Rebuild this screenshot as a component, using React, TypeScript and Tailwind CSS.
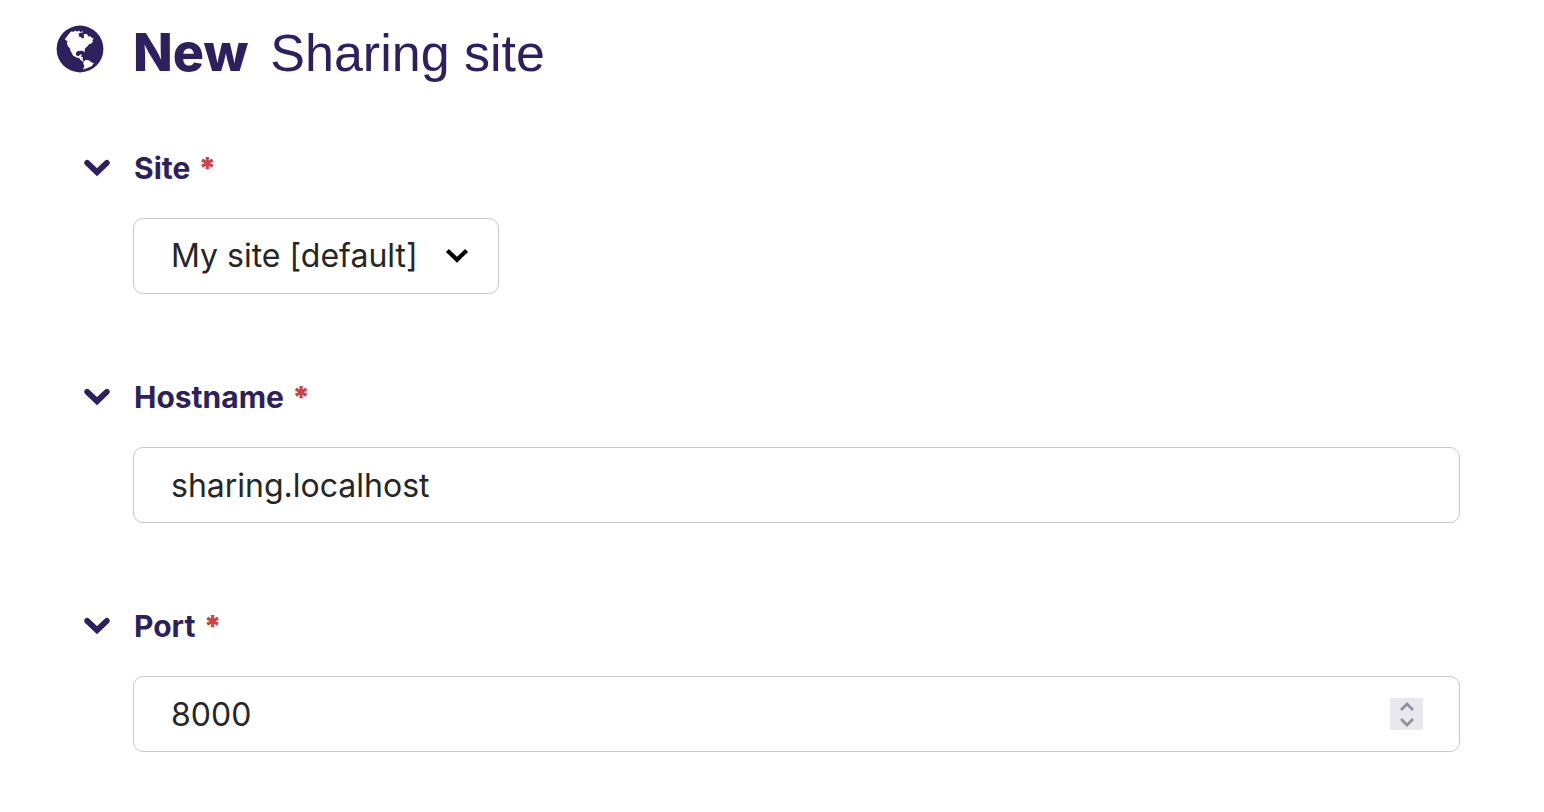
import { useState, type ReactNode } from "react";

const BOX =
  "h-[76px] rounded-[10px] border border-[#c8c8c8] bg-white text-[32px] text-[#262626] outline-none focus-visible:border-[#2e1f5e]";

function GlobeIcon() {
  return (
    <svg viewBox="0 0 48 48" className="size-12 shrink-0 text-[#2e1f5e]" aria-hidden="true">
      <circle cx="24" cy="24" r="23.4" fill="currentColor" />
      <g fill="#fff">
        <path d="M8.8 14.2 L10.2 12.4 12.4 9.4 15 6.6 17.4 6.8 19.6 5.6 21 6.8 23 5.4 24.4 7 26.8 6.2 27.2 7.6 25.2 7.6 24 8 22.4 8.6 23.4 10.2 22.4 11.4 24.8 12 26.4 13.4 27.6 13.2 28 11.6 27.6 9.2 30.6 8.8 32.6 11.4 34.4 11.2 36 13 37.8 13.2 36.2 15.4 37.2 16.6 35 18.8 33 19.2 31 21.8 29 23.4 28.6 26 28.8 27.8 27.2 26 24.8 25.8 21.4 26.2 19.8 28 20.2 30.6 22.6 31 24.4 29.4 26 29.6 25 31.8 27 32.6 26.6 35 28.4 36.4 26.6 36.6 24.6 35 23.4 33.2 20.4 32.4 17 30.6 15.8 28 14.4 25.8 14 23.4 11.8 21 10.8 18.2 11.6 16.4 Z" />
        <path d="M28 36.2 L30 34.8 33.4 35.4 34.8 37 37.8 38.2 35.6 41.2 31.4 43 27 44.4 28.4 41 27.2 38.4 Z" />
      </g>
    </svg>
  );
}

function PanelChevron({ className }: { className: string }) {
  return (
    <svg viewBox="0 0 26 18" className={className} fill="none" stroke="currentColor" strokeWidth="5.8" strokeLinecap="round" aria-hidden="true">
      <path d="M3.2 3.8 L13 13.2 L22.8 3.8" />
    </svg>
  );
}

function SelectChevron() {
  return (
    <svg viewBox="0 0 24 16" className="pointer-events-none absolute top-[30px] right-[30px] h-4 w-6 text-black" fill="none" stroke="currentColor" strokeWidth="4.2" aria-hidden="true">
      <path d="M2.4 2.4 L12 11.8 L21.6 2.4" />
    </svg>
  );
}

function Panel({ id, label, children }: { id: string; label: string; children: ReactNode }) {
  const [open, setOpen] = useState(true);
  return (
    <section>
      <div className="flex h-9 items-center">
        <button type="button" aria-label={"Toggle " + label} aria-expanded={open} onClick={() => setOpen(!open)} className="mr-6 flex w-[26px] shrink-0 text-[#2e1f5e]">
          <PanelChevron className={open ? "h-[18px] w-[26px]" : "h-[18px] w-[26px] -rotate-90"} />
        </button>
        <label htmlFor={id} className="flex items-center text-[30px] leading-9 font-bold text-[#2e1f5e]">
          {label}
          <span className="ml-2 font-black text-[#cd4444]">*</span>
        </label>
      </div>
      {open && <div className="mt-8 ml-[49px]">{children}</div>}
    </section>
  );
}

export default function App() {
  const [port, setPort] = useState(8000);
  return (
    <main className="min-h-screen bg-white pt-[25px] pr-[84px] pb-[60px] pl-14 font-['Inter','Liberation_Sans',sans-serif]">
      <header className="flex h-14 items-start">
        <GlobeIcon />
        <h1 className="ml-[29px] flex items-baseline gap-[22px] text-[52px] leading-[56px] text-[#2e1f5e]">
          <span className="font-extrabold">New</span>
          <span className="font-['Liberation_Sans',sans-serif]">Sharing site</span>
        </h1>
      </header>
      <form className="mt-[69px] ml-7 flex flex-col gap-[85px]">
        <Panel id="site" label="Site">
          <div className="relative w-fit">
            <select id="site" className={BOX + " w-[366px] appearance-none pr-16 pl-[37px]"}>
              <option>My site [default]</option>
            </select>
            <SelectChevron />
          </div>
        </Panel>
        <Panel id="hostname" label="Hostname">
          <input id="hostname" type="text" defaultValue="sharing.localhost" className={BOX + " w-full px-[37px]"} />
        </Panel>
        <Panel id="port" label="Port">
          <div className="relative">
            <input id="port" type="number" value={port} onChange={(e) => setPort(Number(e.target.value))} className={BOX + " w-full appearance-none px-[37px] [-moz-appearance:textfield] [&::-webkit-inner-spin-button]:appearance-none"} />
            <div className="absolute top-[22px] right-[37px] flex h-8 w-[33px] flex-col bg-[#e9e9ed] text-[#8f8f9d]">
              <button type="button" aria-label="Increase port" onClick={() => setPort(port + 1)} className="flex h-4 items-center justify-center">
                <svg viewBox="0 0 14 9" className="h-[9px] w-3.5" fill="none" stroke="currentColor" strokeWidth="2.7" aria-hidden="true"><path d="M1 8 L7 2 L13 8" /></svg>
              </button>
              <button type="button" aria-label="Decrease port" onClick={() => setPort(port - 1)} className="flex h-4 items-center justify-center">
                <svg viewBox="0 0 14 9" className="h-[9px] w-3.5" fill="none" stroke="currentColor" strokeWidth="2.7" aria-hidden="true"><path d="M1 1 L7 7 L13 1" /></svg>
              </button>
            </div>
          </div>
        </Panel>
      </form>
    </main>
  );
}
